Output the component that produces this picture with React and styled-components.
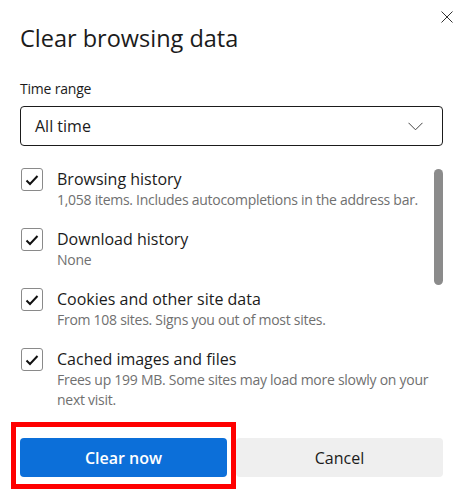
import React from 'react'
import styled, { createGlobalStyle } from 'styled-components'

const GlobalStyle = createGlobalStyle`
  html, body {
    margin: 0;
    padding: 0;
    background: #fff;
  }
  body {
    font-family: 'Open Sans', 'Noto Sans', sans-serif;
    color: #1b1b1b;
  }
`

const items = [
  { title: 'Browsing history', desc: '1,058 items. Includes autocompletions in the address bar.' },
  { title: 'Download history', desc: 'None' },
  { title: 'Cookies and other site data', desc: 'From 108 sites. Signs you out of most sites.' },
  { title: 'Cached images and files', desc: 'Frees up 199 MB. Some sites may load more slowly on your next visit.' },
]

const App = () => {
  return (
    <>
      <GlobalStyle />
      <Dialog>
        <CloseButton aria-label="Close">
          <svg width="12" height="12" viewBox="0 0 12 12">
            <path d="M0.5 0.5 L11.5 11.5 M11.5 0.5 L0.5 11.5" stroke="#333" strokeWidth="1" fill="none" />
          </svg>
        </CloseButton>
        <Title>Clear browsing data</Title>
        <FieldLabel>Time range</FieldLabel>
        <Select>
          <span>All time</span>
          <svg width="15" height="9" viewBox="0 0 15 9">
            <path d="M0.5 0.8 L7.5 7.8 L14.5 0.8" stroke="#444" strokeWidth="1" fill="none" />
          </svg>
        </Select>
        <ListArea>
          <List>
            {items.map((item) => (
              <Item key={item.title}>
                <Checkbox>
                  <svg width="22" height="22" viewBox="0 0 22 22">
                    <path d="M5.5 11.5 L9 15 L16.5 7" stroke="#111" strokeWidth="2" fill="none" />
                  </svg>
                </Checkbox>
                <ItemText>
                  <ItemTitle>{item.title}</ItemTitle>
                  <ItemDesc>{item.desc}</ItemDesc>
                </ItemText>
              </Item>
            ))}
          </List>
          <ScrollTrack>
            <ScrollThumb />
          </ScrollTrack>
        </ListArea>
        <Footer>
          <Highlight>
            <PrimaryButton>Clear now</PrimaryButton>
          </Highlight>
          <SecondaryButton>Cancel</SecondaryButton>
        </Footer>
      </Dialog>
    </>
  )
}

const Dialog = styled.div`
  position: relative;
  width: 464px;
  height: 497px;
  box-sizing: border-box;
  padding: 22px 21px 20px 20px;
  display: flex;
  flex-direction: column;
`

const CloseButton = styled.button`
  position: absolute;
  top: 11px;
  right: 11px;
  width: 12px;
  height: 12px;
  padding: 0;
  border: none;
  background: none;
  display: flex;
`

const Title = styled.h1`
  margin: 0;
  font-size: 23.5px;
  font-weight: 400;
  line-height: 32px;
  color: #1b1b1b;
`

const FieldLabel = styled.div`
  margin-top: 25px;
  font-size: 14px;
  line-height: 20px;
  letter-spacing: -0.2px;
  color: #1b1b1b;
`

const Select = styled.div`
  margin-top: 7px;
  height: 40px;
  box-sizing: border-box;
  border: 1px solid #1b1b1b;
  border-radius: 4px;
  padding: 0 19px 0 14px;
  display: flex;
  align-items: center;
  justify-content: space-between;
  font-size: 16px;
  color: #1b1b1b;
`

const ListArea = styled.div`
  flex: 1;
  min-height: 0;
  margin-top: 22px;
  display: flex;
  overflow: hidden;
`

const List = styled.div`
  flex: 1;
  display: flex;
  flex-direction: column;
  gap: 18px;
`

const Item = styled.div`
  display: flex;
  gap: 14px;
  padding-left: 1px;
`

const Checkbox = styled.div`
  flex: none;
  width: 22px;
  height: 23px;
  box-sizing: border-box;
  border: 1px solid #8a8a8a;
  border-radius: 3px;
  display: flex;
  align-items: center;
  justify-content: center;
  svg {
    margin: -1px;
  }
`

const ItemText = styled.div`
  display: flex;
  flex-direction: column;
`

const ItemTitle = styled.div`
  font-size: 16px;
  line-height: 22px;
  color: #1b1b1b;
`

const ItemDesc = styled.div`
  font-size: 14px;
  line-height: 20px;
  letter-spacing: -0.27px;
  color: #707070;
`

const ScrollTrack = styled.div`
  flex: none;
  width: 9px;
  padding-top: 1px;
`

const ScrollThumb = styled.div`
  width: 9px;
  height: 116px;
  border-radius: 5px;
  background: #8b8b8b;
`

const Footer = styled.div`
  margin-top: 22px;
  display: grid;
  grid-template-columns: 1fr 1fr;
  gap: 9px;
`

const Highlight = styled.div`
  position: relative;
  display: flex;
  &::after {
    content: '';
    position: absolute;
    top: -16px;
    bottom: -12px;
    left: -9px;
    right: -9px;
    border: 5px solid #ff0000;
    pointer-events: none;
  }
`

const Button = styled.button`
  width: 100%;
  height: 39px;
  border: none;
  border-radius: 4px;
  font-family: inherit;
  font-size: 16px;
`

const PrimaryButton = styled(Button)`
  background: #0c6fd9;
  color: #fff;
  font-weight: 600;
`

const SecondaryButton = styled(Button)`
  background: #efefef;
  color: #1b1b1b;
`

export default App
